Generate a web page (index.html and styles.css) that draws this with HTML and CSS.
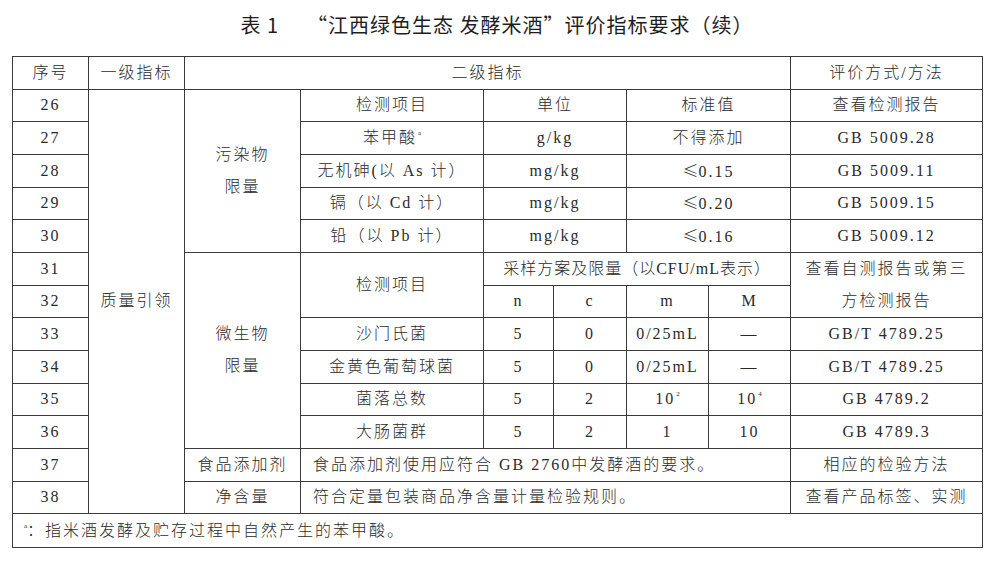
FILE: index.html
```html
<!DOCTYPE html>
<html lang="zh-CN">
<head>
<meta charset="utf-8">
<title>表1 评价指标要求（续）</title>
<link rel="stylesheet" href="styles.css">
</head>
<body>
<div class="page">
  <h1 class="title"><span class="tno">表 1</span><span class="tname">“江西绿色生态 发酵米酒”评价指标要求（续）</span></h1>
  <table class="grid">
    <colgroup>
      <col class="c-no"><col class="c-l1"><col class="c-l2"><col class="c-item">
      <col class="c-n"><col class="c-c"><col class="c-m"><col class="c-mm"><col class="c-eval">
    </colgroup>
    <tr>
      <td>序号</td><td>一级指标</td><td colspan="6">二级指标</td><td>评价方式/方法</td>
    </tr>
    <tr>
      <td>26</td>
      <td rowspan="13">质量引领</td>
      <td rowspan="5" class="multi">污染物<br>限量</td>
      <td>检测项目</td><td colspan="2">单位</td><td colspan="2">标准值</td><td>查看检测报告</td>
    </tr>
    <tr><td>27</td><td>苯甲酸<sup class="sup">a</sup></td><td colspan="2">g/kg</td><td colspan="2">不得添加</td><td>GB 5009.28</td></tr>
    <tr><td>28</td><td>无机砷(以 As 计）</td><td colspan="2">mg/kg</td><td colspan="2"><span class="le">≤</span>0.15</td><td>GB 5009.11</td></tr>
    <tr><td>29</td><td>镉（以 Cd 计）</td><td colspan="2">mg/kg</td><td colspan="2"><span class="le">≤</span>0.20</td><td>GB 5009.15</td></tr>
    <tr><td>30</td><td>铅（以 Pb 计）</td><td colspan="2">mg/kg</td><td colspan="2"><span class="le">≤</span>0.16</td><td>GB 5009.12</td></tr>
    <tr>
      <td>31</td>
      <td rowspan="6" class="multi">微生物<br>限量</td>
      <td rowspan="2">检测项目</td>
      <td colspan="4" class="tight">采样方案及限量（以CFU/mL表示）</td>
      <td rowspan="2" class="multi">查看自测报告或第三<br>方检测报告</td>
    </tr>
    <tr><td>32</td><td>n</td><td>c</td><td>m</td><td>M</td></tr>
    <tr><td>33</td><td>沙门氏菌</td><td>5</td><td>0</td><td>0/25mL</td><td>—</td><td>GB/T 4789.25</td></tr>
    <tr><td>34</td><td>金黄色葡萄球菌</td><td>5</td><td>0</td><td>0/25mL</td><td>—</td><td>GB/T 4789.25</td></tr>
    <tr><td>35</td><td>菌落总数</td><td>5</td><td>2</td><td>10<sup class="sup">2</sup></td><td>10<sup class="sup">4</sup></td><td>GB 4789.2</td></tr>
    <tr><td>36</td><td>大肠菌群</td><td>5</td><td>2</td><td>1</td><td>10</td><td>GB 4789.3</td></tr>
    <tr><td>37</td><td>食品添加剂</td><td colspan="5" class="left">食品添加剂使用应符合 GB 2760中发酵酒的要求。</td><td>相应的检验方法</td></tr>
    <tr><td>38</td><td>净含量</td><td colspan="5" class="left">符合定量包装商品净含量计量检验规则。</td><td>查看产品标签、实测</td></tr>
    <tr><td colspan="9" class="note"><sup class="sup">a</sup>：指米酒发酵及贮存过程中自然产生的苯甲酸。</td></tr>
  </table>
</div>
</body>
</html>
```

FILE: styles.css
```css
html, body {
  margin: 0;
  padding: 0;
  background: #ffffff;
}

.page {
  width: 1000px;
  height: 568px;
  padding-left: 12px;
  box-sizing: border-box;
}

.title {
  margin: 0;
  height: 56px;
  width: 970px;
  display: flex;
  justify-content: center;
  align-items: center;
  padding-bottom: 8px;
  box-sizing: border-box;
  font-family: "Noto Sans CJK SC", sans-serif;
  font-size: 20px;
  font-weight: 400;
  color: #1e1e1e;
  letter-spacing: 1px;
}

.tno {
  margin-right: 28px;
}

.grid {
  border-collapse: collapse;
  table-layout: fixed;
  width: 970px;
  font-family: "Liberation Serif", "Noto Sans CJK SC", serif;
  font-size: 16px;
  font-weight: 300;
  color: #2a2a2a;
  letter-spacing: 2px;
}

.grid tr {
  height: 32.67px;
}

.grid td {
  border: 1px solid #3a3a3a;
  text-align: center;
  vertical-align: middle;
  padding: 0;
  line-height: 20px;
  white-space: nowrap;
}

.grid td.multi {
  line-height: 32px;
}

.grid td.tight {
  letter-spacing: 1px;
}

.grid td.left {
  text-align: left;
  padding-left: 12px;
}

.grid td.note {
  text-align: left;
  padding-left: 10px;
  height: 33px;
}

.le {
  font-family: "Noto Sans CJK SC", sans-serif;
  letter-spacing: 0;
}

.sup {
  font-size: 7px;
  vertical-align: 8px;
  line-height: 0;
  letter-spacing: 0;
  margin-left: 1px;
}

.c-no { width: 76px; }
.c-l1 { width: 96px; }
.c-l2 { width: 116px; }
.c-item { width: 183px; }
.c-n { width: 70px; }
.c-c { width: 73px; }
.c-m { width: 82px; }
.c-mm { width: 82px; }
.c-eval { width: 192px; }
```
